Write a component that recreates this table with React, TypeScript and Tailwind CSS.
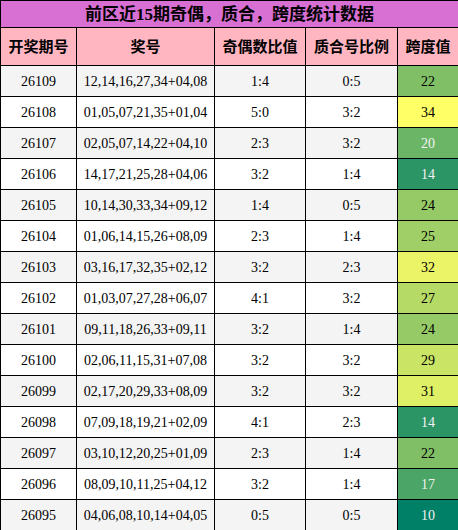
import React from "react";

const rows: [string, string, string, string, number][] = [
  ["26109", "12,14,16,27,34+04,08", "1:4", "0:5", 22],
  ["26108", "01,05,07,21,35+01,04", "5:0", "3:2", 34],
  ["26107", "02,05,07,14,22+04,10", "2:3", "3:2", 20],
  ["26106", "14,17,21,25,28+04,06", "3:2", "1:4", 14],
  ["26105", "10,14,30,33,34+09,12", "1:4", "0:5", 24],
  ["26104", "01,06,14,15,26+08,09", "2:3", "1:4", 25],
  ["26103", "03,16,17,32,35+02,12", "3:2", "2:3", 32],
  ["26102", "01,03,07,27,28+06,07", "4:1", "3:2", 27],
  ["26101", "09,11,18,26,33+09,11", "3:2", "1:4", 24],
  ["26100", "02,06,11,15,31+07,08", "3:2", "3:2", 29],
  ["26099", "02,17,20,29,33+08,09", "3:2", "3:2", 31],
  ["26098", "07,09,18,19,21+02,09", "4:1", "2:3", 14],
  ["26097", "03,10,12,20,25+01,09", "2:3", "1:4", 22],
  ["26096", "08,09,10,11,25+04,12", "3:2", "1:4", 17],
  ["26095", "04,06,08,10,14+04,05", "0:5", "0:5", 10],
];

function spanColor(v: number) {
  const x = (v - 10) / 24;
  const r = Math.round(x * 255);
  const g = Math.round((0.5 + x / 2) * 255);
  return `rgb(${r},${g},102)`;
}

const cell =
  "h-[31px] p-0 border border-black text-center text-[14px] font-['Liberation_Serif','Noto_Sans_CJK_SC',serif]";

export default function App() {
  return (
    <div className="w-[458px] h-[530px] bg-white overflow-hidden">
      <table className="w-[458px] table-fixed border-collapse text-black">
        <colgroup>
          <col className="w-[76px]" />
          <col className="w-[138px]" />
          <col className="w-[91px]" />
          <col className="w-[92px]" />
          <col className="w-[61px]" />
        </colgroup>
        <thead>
          <tr>
            <th
              colSpan={5}
              className="h-[26px] p-0 border border-black bg-[#d86fd3] text-[17px] leading-[24px] font-bold text-center font-['Noto_Sans_CJK_SC','Noto_Sans',sans-serif]"
            >
              前区近<span className="font-['Liberation_Serif',serif]">15</span>期奇偶，质合，跨度统计数据
            </th>
          </tr>
          <tr>
            {["开奖期号", "奖号", "奇偶数比值", "质合号比例", "跨度值"].map((h) => (
              <th
                key={h}
                className="h-[38px] p-0 border border-black bg-[#ffb6c1] text-[15px] font-bold text-center font-['Noto_Sans_CJK_SC','Noto_Sans',sans-serif]"
              >
                {h}
              </th>
            ))}
          </tr>
        </thead>
        <tbody>
          {rows.map((r, i) => {
            const bg = i % 2 === 0 ? "bg-[#f4f4f4]" : "bg-white";
            const light = r[4] <= 20;
            return (
              <tr key={r[0]}>
                <td className={`${cell} ${bg}`}>{r[0]}</td>
                <td className={`${cell} ${bg}`}>{r[1]}</td>
                <td className={`${cell} ${bg}`}>{r[2]}</td>
                <td className={`${cell} ${bg}`}>{r[3]}</td>
                <td
                  className={`${cell} ${light ? "text-[#f1f1f1]" : "text-black"}`}
                  style={{ backgroundColor: spanColor(r[4]) }}
                >
                  {r[4]}
                </td>
              </tr>
            );
          })}
        </tbody>
      </table>
    </div>
  );
}
